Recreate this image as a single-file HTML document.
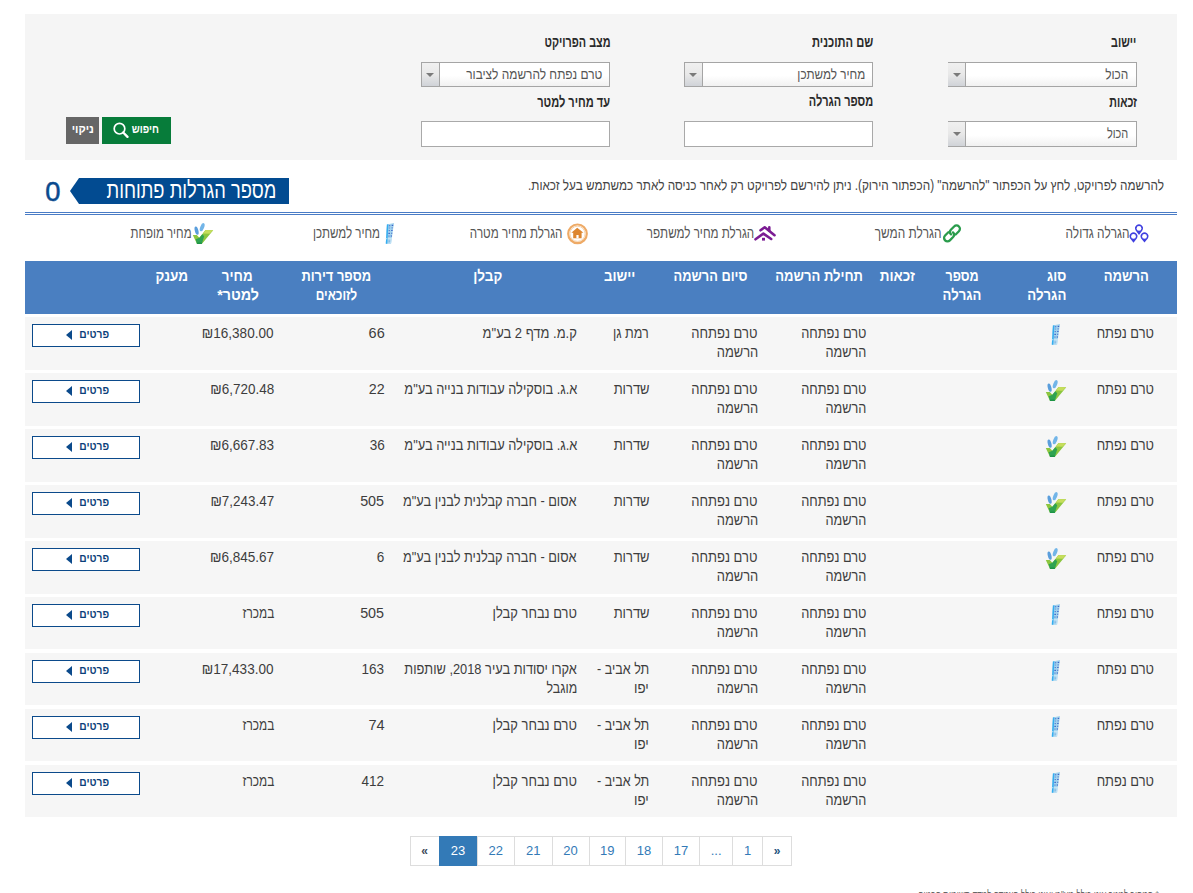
<!DOCTYPE html>
<html lang="he" dir="rtl">
<head>
<meta charset="utf-8">
<title>הגרלות</title>
<style>
html,body{margin:0;padding:0;background:#fff;}
body{width:1193px;height:893px;overflow:hidden;position:relative;font-family:"Liberation Sans",sans-serif;color:#333;}
.t{position:absolute;white-space:nowrap;direction:rtl;unicode-bidi:plaintext;transform-origin:100% 0;}
.panel{position:absolute;left:25px;top:14px;width:1152px;height:146px;background:#f5f5f5;}
.sel{position:absolute;height:23px;width:187px;border:1px solid #a5a5a5;background:linear-gradient(#fff 0,#fff 55%,#f1f1f1 100%);}
.sel .arr{position:absolute;left:0;top:0;width:17px;height:23px;border-right:1px solid #a5a5a5;background:linear-gradient(#f0f0f0 0,#e8e8e8 50%,#d0d3d8 100%);}
.sel .arr:after{content:"";position:absolute;left:4px;top:10px;border-left:4px solid transparent;border-right:4px solid transparent;border-top:4px solid #7a7a7a;}
.sel.nl{border-left:none;width:188px;}
.sel.nl .arr{width:17px;}
.sel.nl .arr:after{left:5px;}
.inp{position:absolute;height:24px;width:187px;border:1px solid #a9a9a9;background:#fff;}
.btn-g{position:absolute;left:102px;top:117px;width:69px;height:27px;background:#077c3a;}
.btn-k{position:absolute;left:66px;top:117px;width:33px;height:27px;background:#666;}
.banner{position:absolute;left:79px;top:178px;width:210px;height:26px;background:#024b91;}
.banner:before{content:"";position:absolute;left:-9px;top:0;border-right:9px solid #024b91;border-top:13px solid transparent;border-bottom:13px solid transparent;}
.dbl{position:absolute;left:25px;width:1152px;height:1px;background:#4a7cc6;}
.hdr{position:absolute;left:25px;top:261px;width:1152px;height:53px;background:#4a7fc1;}
.row{position:absolute;left:25px;width:1152px;height:53px;background:#f6f6f6;}
.det{position:absolute;left:32px;width:106px;height:21px;border:1px solid #0b4a8b;background:#fff;}
.tri{position:absolute;left:66px;width:0;height:0;border-right:6px solid #0b4a8b;border-top:5px solid transparent;border-bottom:5px solid transparent;}
.ico{position:absolute;overflow:visible;}
.pgbox{position:absolute;left:410px;top:836px;width:380px;height:28px;border:1px solid #ddd;}
.pgsep{position:absolute;top:836px;width:1px;height:30px;background:#ddd;}
.pgact{position:absolute;top:836px;height:30px;background:#337ab7;}
.pg{position:absolute;top:837px;height:28px;direction:ltr;font-size:13px;line-height:28px;text-align:center;color:#337ab7;}
</style>
</head>
<body>
<svg width="0" height="0" style="position:absolute">
<defs>
<symbol id="bld" viewBox="0 0 10 22">
  <polygon points="1.9,1.6 9,0.1 6,20.8 0.8,20.8" fill="#a3d3ee"/>
  <polygon points="5.5,15.2 7,15.2 6,20.8 5,20.8" fill="#c4e3f5"/>
  <polygon points="0.8,15.3 6.8,15.3 6.6,16.2 0.8,16.2" fill="#cfe8f6"/>
  <polygon points="1.9,1.6 3.4,1.3 2.3,20.8 0.8,20.8" fill="#33adf0"/>
  <polygon points="0.8,15.3 2.3,15.3 2.25,16.2 0.8,16.2" fill="#bfe2f6"/>
  <g fill="#3a62c8">
    <rect x="3.9" y="2.2" width="1.4" height="1.1" opacity=".8"/><rect x="6.7" y="1.8" width="1.5" height="1.2"/>
    <rect x="3.8" y="4.4" width="1.3" height="1.3" opacity=".45"/><rect x="6.5" y="4.2" width="1.3" height="1.3" opacity=".6"/>
    <rect x="3.6" y="7" width="1.4" height="1.1" opacity=".7"/><rect x="6.2" y="6.9" width="1.4" height="1.1"/>
    <rect x="3.4" y="9.8" width="1.5" height="1.2"/><rect x="6" y="9.7" width="1.3" height="1.2" opacity=".7"/>
    <rect x="3.3" y="12.4" width="1.3" height="1.4" opacity=".6"/><rect x="5.7" y="12.3" width="1.3" height="1.4" opacity=".8"/>
    <rect x="3.6" y="17.6" width="1.6" height="1" opacity=".35"/>
  </g>
</symbol>
<symbol id="spr" viewBox="0 0 22 22">
  <polygon points="0.8,13 4.8,13 7.4,15.8 13.5,8 21.2,8.3 9.8,22 5,22" fill="#8cc63f"/>
  <polygon points="13.5,8 21.2,8.3 17.6,11.8 10.9,11.6" fill="#c6dd5c"/>
  <polygon points="3.6,17.2 7.4,15.8 10.3,12.3 12.2,14.2 9.8,22 5,22" fill="#2fa352"/>
  <polygon points="5,22 9.8,22 9.3,20.5 5.4,20.5" fill="#1e9346"/>
  <ellipse cx="4.6" cy="8.6" rx="1.8" ry="4.3" transform="rotate(-14 4.6 8.6)" fill="#5a9edc"/>
  <ellipse cx="10.2" cy="5.2" rx="1.9" ry="4.3" transform="rotate(22 10.2 5.2)" fill="#72b5e8"/>
</symbol>
</defs>
</svg>

<div class="panel"></div>
<div class="sel nl" style="left:948px;top:62px"><div class="arr"></div></div>
<div class="sel" style="left:684px;top:62px"><div class="arr"></div></div>
<div class="sel" style="left:421px;top:62px"><div class="arr"></div></div>
<div class="sel nl" style="left:948px;top:121px;height:24px"><div class="arr" style="height:24px"></div></div>
<div class="inp" style="left:684px;top:121px"></div>
<div class="inp" style="left:421px;top:121px"></div>
<div class="btn-g"></div>
<div class="btn-k"></div>
<svg class="ico" style="left:112px;top:122px" width="18" height="17" viewBox="0 0 18 17">
  <circle cx="7.5" cy="6.7" r="5.3" fill="none" stroke="#fff" stroke-width="1.7"/>
  <line x1="11.2" y1="10.5" x2="15.5" y2="14.8" stroke="#fff" stroke-width="2.4" stroke-linecap="round"/>
</svg>

<div class="banner"></div>
<div class="dbl" style="top:212px"></div>
<div class="dbl" style="top:214px"></div>

<!-- legend icons -->
<svg class="ico" style="left:1126px;top:222px" width="26" height="24" viewBox="0 0 26 24" fill="none" stroke="#4040e0">
  <path d="M13,12.9 L9.7,8.4 A3.9,3.9 0 1 1 16.3,8.4 Z" fill="#4040e0" stroke="none"/>
  <circle cx="13" cy="6.4" r="2.4" fill="#fff" stroke="none"/>
  <path d="M7.5,20.8 L4.2,16.4 A3.9,3.9 0 1 1 10.8,16.4 Z" fill="#4040e0" stroke="none"/>
  <circle cx="7.5" cy="14.4" r="2.4" fill="#fff" stroke="none"/>
  <path d="M18.5,20.4 L15.2,16.4 A3.9,3.9 0 1 1 21.8,16.4 Z" fill="#4040e0" stroke="none"/>
  <circle cx="18.5" cy="14.4" r="2.4" fill="#fff" stroke="none"/>
</svg>
<svg class="ico" style="left:939px;top:222px" width="26" height="24" viewBox="0 0 26 24">
  <g fill="none" stroke="#2a9c4c" stroke-width="2.3" stroke-linecap="round" transform="rotate(-45 13 11.4)">
    <path d="M11.2,8 H6.6 A3.4,3.4 0 0 0 6.6,14.8 H11.2 A3.4,3.4 0 0 0 14.4,11.4"/>
    <path d="M14.8,14.8 H19.4 A3.4,3.4 0 0 0 19.4,8 H14.8 A3.4,3.4 0 0 0 11.6,11.4"/>
  </g>
</svg>
<svg class="ico" style="left:751px;top:222px" width="28" height="24" viewBox="0 0 28 24">
  <g fill="none" stroke="#7b1c93" stroke-width="2.6" stroke-linecap="round" stroke-linejoin="round">
    <polyline points="9.5,8.3 13.7,5.3 23.5,13.2"/>
    <polyline points="4.5,17.3 12.4,11.6 20.2,17"/>
    <line x1="18.3" y1="5.4" x2="18.3" y2="8.5"/>
  </g>
  <rect x="11" y="15.8" width="3" height="2.8" fill="#7b1c93"/>
</svg>
<svg class="ico" style="left:563px;top:221px" width="28" height="26" viewBox="0 0 28 26">
  <circle cx="14.5" cy="12.8" r="9.3" fill="#fff" stroke="#eeaa66" stroke-width="2.2"/>
  <circle cx="14.5" cy="12.8" r="7.6" fill="none" stroke="#f6d2aa" stroke-width="1"/>
  <polygon points="14.2,6.8 20.5,11.8 18.6,11.8 18.6,17.2 10.2,17.2 10.2,11.8 8.3,11.8" fill="#dd8630"/>
  <rect x="13.4" y="14" width="2.2" height="3.2" fill="#fff"/>
</svg>
<svg class="ico" style="left:385px;top:223px" width="10" height="22" viewBox="0 0 10 22"><use href="#bld"/></svg>
<svg class="ico" style="left:191.5px;top:222px" width="22" height="22" viewBox="0 0 22 22"><use href="#spr"/></svg>

<div class="hdr"></div>
<div class="row" style="top:317px"></div>
<div class="det" style="top:324px"></div><div class="tri" style="top:330px"></div>
<svg class="ico" style="left:1051px;top:324px" width="10" height="22" viewBox="0 0 10 22"><use href="#bld"/></svg>
<div class="row" style="top:373px"></div>
<div class="det" style="top:380px"></div><div class="tri" style="top:386px"></div>
<svg class="ico" style="left:1045px;top:379px" width="22" height="22" viewBox="0 0 22 22"><use href="#spr"/></svg>
<div class="row" style="top:429px"></div>
<div class="det" style="top:436px"></div><div class="tri" style="top:442px"></div>
<svg class="ico" style="left:1045px;top:435px" width="22" height="22" viewBox="0 0 22 22"><use href="#spr"/></svg>
<div class="row" style="top:485px"></div>
<div class="det" style="top:492px"></div><div class="tri" style="top:498px"></div>
<svg class="ico" style="left:1045px;top:491px" width="22" height="22" viewBox="0 0 22 22"><use href="#spr"/></svg>
<div class="row" style="top:541px"></div>
<div class="det" style="top:548px"></div><div class="tri" style="top:554px"></div>
<svg class="ico" style="left:1045px;top:547px" width="22" height="22" viewBox="0 0 22 22"><use href="#spr"/></svg>
<div class="row" style="top:597px;height:52px"></div>
<div class="det" style="top:604px"></div><div class="tri" style="top:610px"></div>
<svg class="ico" style="left:1051px;top:604px" width="10" height="22" viewBox="0 0 10 22"><use href="#bld"/></svg>
<div class="row" style="top:653px;height:52px"></div>
<div class="det" style="top:660px"></div><div class="tri" style="top:666px"></div>
<svg class="ico" style="left:1051px;top:660px" width="10" height="22" viewBox="0 0 10 22"><use href="#bld"/></svg>
<div class="row" style="top:709px;height:52px"></div>
<div class="det" style="top:716px"></div><div class="tri" style="top:722px"></div>
<svg class="ico" style="left:1051px;top:716px" width="10" height="22" viewBox="0 0 10 22"><use href="#bld"/></svg>
<div class="row" style="top:765px;height:52px"></div>
<div class="det" style="top:772px"></div><div class="tri" style="top:778px"></div>
<svg class="ico" style="left:1051px;top:772px" width="10" height="22" viewBox="0 0 10 22"><use href="#bld"/></svg>
<div class="pgbox"></div>
<div class="pgsep" style="left:438.5px"></div>
<div class="pgsep" style="left:476.5px"></div>
<div class="pgsep" style="left:514.0px"></div>
<div class="pgsep" style="left:551.5px"></div>
<div class="pgsep" style="left:588.5px"></div>
<div class="pgsep" style="left:625.0px"></div>
<div class="pgsep" style="left:662.0px"></div>
<div class="pgsep" style="left:699.2px"></div>
<div class="pgsep" style="left:732.1px"></div>
<div class="pgsep" style="left:761.9px"></div>
<div class="pg" style="left:410px;width:29px;color:#3d4a5a;font-weight:bold;font-size:12px;">«</div>
<div class="pgact" style="left:439px;width:38px"></div>
<div class="pg" style="left:439px;width:38px;color:#fff;">23</div>
<div class="pg" style="left:477px;width:37.5px;">22</div>
<div class="pg" style="left:514.5px;width:37.5px;">21</div>
<div class="pg" style="left:552px;width:37px;">20</div>
<div class="pg" style="left:589px;width:36.5px;">19</div>
<div class="pg" style="left:625.5px;width:37.0px;">18</div>
<div class="pg" style="left:662.5px;width:37.200000000000045px;">17</div>
<div class="pg" style="left:699.7px;width:32.89999999999998px;">...</div>
<div class="pg" style="left:732.6px;width:29.799999999999955px;">1</div>
<div class="pg" style="left:762.4px;width:29.300000000000068px;color:#23527c;font-weight:bold;font-size:12px;">»</div>
<div class="t" style="left:1101.33px;top:34.3px;font-size:15px;line-height:15px;font-weight:700;color:#2a2a2a;transform:scaleX(0.715);">יישוב</div>
<div class="t" style="left:791.35px;top:34.3px;font-size:15px;line-height:15px;font-weight:700;color:#2a2a2a;transform:scaleX(0.744);">שם התוכנית</div>
<div class="t" style="left:518.67px;top:34.3px;font-size:15px;line-height:15px;font-weight:700;color:#2a2a2a;transform:scaleX(0.721);">מצב הפרויקט</div>
<div class="t" style="left:1097.78px;top:93.8px;font-size:15px;line-height:15px;font-weight:700;color:#2a2a2a;transform:scaleX(0.710);">זכאות</div>
<div class="t" style="left:785.41px;top:93.3px;font-size:15px;line-height:15px;font-weight:700;color:#2a2a2a;transform:scaleX(0.731);">מספר הגרלה</div>
<div class="t" style="left:511.17px;top:93.8px;font-size:15px;line-height:15px;font-weight:700;color:#2a2a2a;transform:scaleX(0.735);">עד מחיר למטר</div>
<div class="t" style="left:1101.12px;top:67.15px;font-size:14px;line-height:14px;color:#555;transform:scaleX(0.847);">הכול</div>
<div class="t" style="left:784.26px;top:67.15px;font-size:14px;line-height:14px;color:#555;transform:scaleX(0.836);">מחיר למשתכן</div>
<div class="t" style="left:442.26px;top:66.55px;font-size:14px;line-height:14px;color:#555;transform:scaleX(0.849);">טרם נפתח להרשמה לציבור</div>
<div class="t" style="left:1101.02px;top:126.15px;font-size:14px;line-height:14px;color:#555;transform:scaleX(0.781);">הכול</div>
<div class="t" style="left:125.51px;top:123.14px;font-size:12px;line-height:12px;font-weight:700;color:#fff;transform:scaleX(0.824);">חיפוש</div>
<div class="t" style="left:69.71px;top:123.14px;font-size:12px;line-height:12px;font-weight:700;color:#fff;transform:scaleX(0.929);">ניקוי</div>
<div class="t" style="left:405.74px;top:178.15px;font-size:14px;line-height:14px;color:#444;transform:scaleX(0.839);">להרשמה לפרויקט, לחץ על הכפתור "להרשמה" (הכפתור הירוק). ניתן להירשם לפרויקט רק לאחר כניסה לאתר כמשתמש בעל זכאות.</div>
<div class="t" style="left:62.8px;top:178.83px;font-size:23px;line-height:23px;color:#fff;transform:scaleX(0.796);">מספר הגרלות פתוחות</div>
<div class="t" style="left:45.02px;top:177.8px;font-size:28px;line-height:28px;color:#0a4a8e;transform:scaleX(0.976);-webkit-text-stroke:0.5px #0a4a8e;">0</div>
<div class="t" style="left:1045.71px;top:224.88px;font-size:15.5px;line-height:15.5px;color:#555;transform:scaleX(0.766);">הגרלה גדולה</div>
<div class="t" style="left:854.1px;top:224.88px;font-size:15.5px;line-height:15.5px;color:#555;transform:scaleX(0.763);">הגרלת המשך</div>
<div class="t" style="left:611.2px;top:224.88px;font-size:15.5px;line-height:15.5px;color:#555;transform:scaleX(0.750);">הגרלת מחיר למשתפר</div>
<div class="t" style="left:439.15px;top:224.88px;font-size:15.5px;line-height:15.5px;color:#555;transform:scaleX(0.750);">הגרלת מחיר מטרה</div>
<div class="t" style="left:289.54px;top:224.88px;font-size:15.5px;line-height:15.5px;color:#555;transform:scaleX(0.746);">מחיר למשתכן</div>
<div class="t" style="left:109.28px;top:224.88px;font-size:15.5px;line-height:15.5px;color:#555;transform:scaleX(0.740);">מחיר מופחת</div>
<div class="t" style="left:1096.51px;top:268.3px;font-size:15px;line-height:15px;font-weight:700;color:#fff;transform:scaleX(0.871);">הרשמה</div>
<div class="t" style="left:1044.41px;top:268.3px;font-size:15px;line-height:15px;font-weight:700;color:#fff;transform:scaleX(0.865);">סוג</div>
<div class="t" style="left:1022.21px;top:287px;font-size:15px;line-height:15px;font-weight:700;color:#fff;transform:scaleX(0.883);">הגרלה</div>
<div class="t" style="left:938.96px;top:268.3px;font-size:15px;line-height:15px;font-weight:700;color:#fff;transform:scaleX(0.838);">מספר</div>
<div class="t" style="left:936.81px;top:287px;font-size:15px;line-height:15px;font-weight:700;color:#fff;transform:scaleX(0.874);">הגרלה</div>
<div class="t" style="left:875.58px;top:268.3px;font-size:15px;line-height:15px;font-weight:700;color:#fff;transform:scaleX(0.902);">זכאות</div>
<div class="t" style="left:761.69px;top:268.3px;font-size:15px;line-height:15px;font-weight:700;color:#fff;transform:scaleX(0.868);">תחילת הרשמה</div>
<div class="t" style="left:660.91px;top:268.3px;font-size:15px;line-height:15px;font-weight:700;color:#fff;transform:scaleX(0.855);">סיום הרשמה</div>
<div class="t" style="left:600.13px;top:268.3px;font-size:15px;line-height:15px;font-weight:700;color:#fff;transform:scaleX(0.890);">יישוב</div>
<div class="t" style="left:469.88px;top:268.3px;font-size:15px;line-height:15px;font-weight:700;color:#fff;transform:scaleX(0.900);">קבלן</div>
<div class="t" style="left:290px;top:268.3px;font-size:15px;line-height:15px;font-weight:700;color:#fff;transform:scaleX(0.859);">מספר דירות</div>
<div class="t" style="left:305.44px;top:287px;font-size:15px;line-height:15px;font-weight:700;color:#fff;transform:scaleX(0.794);">לזוכאים</div>
<div class="t" style="left:218.42px;top:268.3px;font-size:15px;line-height:15px;font-weight:700;color:#fff;transform:scaleX(0.888);">מחיר</div>
<div class="t" style="left:215.03px;top:287px;font-size:15px;line-height:15px;font-weight:700;color:#fff;transform:scaleX(0.951);">למטר*</div>
<div class="t" style="left:151.6px;top:268.3px;font-size:15px;line-height:15px;font-weight:700;color:#fff;transform:scaleX(0.900);">מענק</div>
<div class="t" style="left:1087.28px;top:325.3px;font-size:15px;line-height:15px;color:#3d3d3d;transform:scaleX(0.856);">טרם נפתח</div>
<div class="t" style="left:789.66px;top:325.3px;font-size:15px;line-height:15px;color:#3d3d3d;transform:scaleX(0.853);">טרם נפתחה</div>
<div class="t" style="left:817.82px;top:344.3px;font-size:15px;line-height:15px;color:#3d3d3d;transform:scaleX(0.847);">הרשמה</div>
<div class="t" style="left:681.46px;top:325.3px;font-size:15px;line-height:15px;color:#3d3d3d;transform:scaleX(0.865);">טרם נפתחה</div>
<div class="t" style="left:709.62px;top:344.3px;font-size:15px;line-height:15px;color:#3d3d3d;transform:scaleX(0.860);">הרשמה</div>
<div class="t" style="left:606.44px;top:325.3px;font-size:15px;line-height:15px;color:#3d3d3d;transform:scaleX(0.837);">רמת גן</div>
<div class="t" style="left:468.21px;top:325.3px;font-size:15px;line-height:15px;color:#3d3d3d;transform:scaleX(0.866);">ק.מ. מדף 2 בע"מ</div>
<div class="t" style="left:367.61px;top:325.3px;font-size:15px;line-height:15px;color:#3d3d3d;transform:scaleX(0.965);">66</div>
<div class="t" style="left:194.43px;top:325.3px;font-size:15px;line-height:15px;color:#3d3d3d;transform:scaleX(0.902);">₪16,380.00</div>
<div class="t" style="left:77.49px;top:329.09px;font-size:11px;line-height:11px;font-weight:700;color:#0b3f7a;transform:scaleX(0.928);">פרטים</div>
<div class="t" style="left:1087.28px;top:381.3px;font-size:15px;line-height:15px;color:#3d3d3d;transform:scaleX(0.856);">טרם נפתח</div>
<div class="t" style="left:789.66px;top:381.3px;font-size:15px;line-height:15px;color:#3d3d3d;transform:scaleX(0.853);">טרם נפתחה</div>
<div class="t" style="left:817.82px;top:400.3px;font-size:15px;line-height:15px;color:#3d3d3d;transform:scaleX(0.847);">הרשמה</div>
<div class="t" style="left:681.46px;top:381.3px;font-size:15px;line-height:15px;color:#3d3d3d;transform:scaleX(0.865);">טרם נפתחה</div>
<div class="t" style="left:709.62px;top:400.3px;font-size:15px;line-height:15px;color:#3d3d3d;transform:scaleX(0.860);">הרשמה</div>
<div class="t" style="left:607.55px;top:381.3px;font-size:15px;line-height:15px;color:#3d3d3d;transform:scaleX(0.864);">שדרות</div>
<div class="t" style="left:374.71px;top:381.3px;font-size:15px;line-height:15px;color:#3d3d3d;transform:scaleX(0.855);">א.ג. בוסקילה עבודות בנייה בע"מ</div>
<div class="t" style="left:367.61px;top:381.3px;font-size:15px;line-height:15px;color:#3d3d3d;transform:scaleX(0.953);">22</div>
<div class="t" style="left:202.76px;top:381.3px;font-size:15px;line-height:15px;color:#3d3d3d;transform:scaleX(0.898);">₪6,720.48</div>
<div class="t" style="left:77.49px;top:385.09px;font-size:11px;line-height:11px;font-weight:700;color:#0b3f7a;transform:scaleX(0.928);">פרטים</div>
<div class="t" style="left:1087.28px;top:437.3px;font-size:15px;line-height:15px;color:#3d3d3d;transform:scaleX(0.856);">טרם נפתח</div>
<div class="t" style="left:789.66px;top:437.3px;font-size:15px;line-height:15px;color:#3d3d3d;transform:scaleX(0.853);">טרם נפתחה</div>
<div class="t" style="left:817.82px;top:456.3px;font-size:15px;line-height:15px;color:#3d3d3d;transform:scaleX(0.847);">הרשמה</div>
<div class="t" style="left:681.46px;top:437.3px;font-size:15px;line-height:15px;color:#3d3d3d;transform:scaleX(0.865);">טרם נפתחה</div>
<div class="t" style="left:709.62px;top:456.3px;font-size:15px;line-height:15px;color:#3d3d3d;transform:scaleX(0.860);">הרשמה</div>
<div class="t" style="left:607.55px;top:437.3px;font-size:15px;line-height:15px;color:#3d3d3d;transform:scaleX(0.864);">שדרות</div>
<div class="t" style="left:374.71px;top:437.3px;font-size:15px;line-height:15px;color:#3d3d3d;transform:scaleX(0.855);">א.ג. בוסקילה עבודות בנייה בע"מ</div>
<div class="t" style="left:367.61px;top:437.3px;font-size:15px;line-height:15px;color:#3d3d3d;transform:scaleX(0.902);">36</div>
<div class="t" style="left:202.76px;top:437.3px;font-size:15px;line-height:15px;color:#3d3d3d;transform:scaleX(0.902);">₪6,667.83</div>
<div class="t" style="left:77.49px;top:441.09px;font-size:11px;line-height:11px;font-weight:700;color:#0b3f7a;transform:scaleX(0.928);">פרטים</div>
<div class="t" style="left:1087.28px;top:493.3px;font-size:15px;line-height:15px;color:#3d3d3d;transform:scaleX(0.856);">טרם נפתח</div>
<div class="t" style="left:789.66px;top:493.3px;font-size:15px;line-height:15px;color:#3d3d3d;transform:scaleX(0.853);">טרם נפתחה</div>
<div class="t" style="left:817.82px;top:512.3px;font-size:15px;line-height:15px;color:#3d3d3d;transform:scaleX(0.847);">הרשמה</div>
<div class="t" style="left:681.46px;top:493.3px;font-size:15px;line-height:15px;color:#3d3d3d;transform:scaleX(0.865);">טרם נפתחה</div>
<div class="t" style="left:709.62px;top:512.3px;font-size:15px;line-height:15px;color:#3d3d3d;transform:scaleX(0.860);">הרשמה</div>
<div class="t" style="left:607.55px;top:493.3px;font-size:15px;line-height:15px;color:#3d3d3d;transform:scaleX(0.864);">שדרות</div>
<div class="t" style="left:373.48px;top:493.3px;font-size:15px;line-height:15px;color:#3d3d3d;transform:scaleX(0.853);">אסום - חברה קבלנית לבנין בע"מ</div>
<div class="t" style="left:359.27px;top:493.3px;font-size:15px;line-height:15px;color:#3d3d3d;transform:scaleX(0.955);">505</div>
<div class="t" style="left:202.76px;top:493.3px;font-size:15px;line-height:15px;color:#3d3d3d;transform:scaleX(0.895);">₪7,243.47</div>
<div class="t" style="left:77.49px;top:497.09px;font-size:11px;line-height:11px;font-weight:700;color:#0b3f7a;transform:scaleX(0.928);">פרטים</div>
<div class="t" style="left:1087.28px;top:549.3px;font-size:15px;line-height:15px;color:#3d3d3d;transform:scaleX(0.856);">טרם נפתח</div>
<div class="t" style="left:789.66px;top:549.3px;font-size:15px;line-height:15px;color:#3d3d3d;transform:scaleX(0.853);">טרם נפתחה</div>
<div class="t" style="left:817.82px;top:568.3px;font-size:15px;line-height:15px;color:#3d3d3d;transform:scaleX(0.847);">הרשמה</div>
<div class="t" style="left:681.46px;top:549.3px;font-size:15px;line-height:15px;color:#3d3d3d;transform:scaleX(0.865);">טרם נפתחה</div>
<div class="t" style="left:709.62px;top:568.3px;font-size:15px;line-height:15px;color:#3d3d3d;transform:scaleX(0.860);">הרשמה</div>
<div class="t" style="left:607.55px;top:549.3px;font-size:15px;line-height:15px;color:#3d3d3d;transform:scaleX(0.864);">שדרות</div>
<div class="t" style="left:373.48px;top:549.3px;font-size:15px;line-height:15px;color:#3d3d3d;transform:scaleX(0.853);">אסום - חברה קבלנית לבנין בע"מ</div>
<div class="t" style="left:375.96px;top:549.3px;font-size:15px;line-height:15px;color:#3d3d3d;transform:scaleX(0.902);">6</div>
<div class="t" style="left:202.76px;top:549.3px;font-size:15px;line-height:15px;color:#3d3d3d;transform:scaleX(0.902);">₪6,845.67</div>
<div class="t" style="left:77.49px;top:553.09px;font-size:11px;line-height:11px;font-weight:700;color:#0b3f7a;transform:scaleX(0.928);">פרטים</div>
<div class="t" style="left:1087.28px;top:605.3px;font-size:15px;line-height:15px;color:#3d3d3d;transform:scaleX(0.856);">טרם נפתח</div>
<div class="t" style="left:789.66px;top:605.3px;font-size:15px;line-height:15px;color:#3d3d3d;transform:scaleX(0.853);">טרם נפתחה</div>
<div class="t" style="left:817.82px;top:624.3px;font-size:15px;line-height:15px;color:#3d3d3d;transform:scaleX(0.847);">הרשמה</div>
<div class="t" style="left:681.46px;top:605.3px;font-size:15px;line-height:15px;color:#3d3d3d;transform:scaleX(0.865);">טרם נפתחה</div>
<div class="t" style="left:709.62px;top:624.3px;font-size:15px;line-height:15px;color:#3d3d3d;transform:scaleX(0.860);">הרשמה</div>
<div class="t" style="left:607.55px;top:605.3px;font-size:15px;line-height:15px;color:#3d3d3d;transform:scaleX(0.864);">שדרות</div>
<div class="t" style="left:479.16px;top:605.3px;font-size:15px;line-height:15px;color:#3d3d3d;transform:scaleX(0.861);">טרם נבחר קבלן</div>
<div class="t" style="left:359.27px;top:605.3px;font-size:15px;line-height:15px;color:#3d3d3d;transform:scaleX(0.955);">505</div>
<div class="t" style="left:233.59px;top:605.3px;font-size:15px;line-height:15px;color:#3d3d3d;transform:scaleX(0.791);">במכרז</div>
<div class="t" style="left:77.49px;top:609.09px;font-size:11px;line-height:11px;font-weight:700;color:#0b3f7a;transform:scaleX(0.928);">פרטים</div>
<div class="t" style="left:1087.28px;top:661.3px;font-size:15px;line-height:15px;color:#3d3d3d;transform:scaleX(0.856);">טרם נפתח</div>
<div class="t" style="left:789.66px;top:661.3px;font-size:15px;line-height:15px;color:#3d3d3d;transform:scaleX(0.853);">טרם נפתחה</div>
<div class="t" style="left:817.82px;top:680.3px;font-size:15px;line-height:15px;color:#3d3d3d;transform:scaleX(0.847);">הרשמה</div>
<div class="t" style="left:681.46px;top:661.3px;font-size:15px;line-height:15px;color:#3d3d3d;transform:scaleX(0.865);">טרם נפתחה</div>
<div class="t" style="left:709.62px;top:680.3px;font-size:15px;line-height:15px;color:#3d3d3d;transform:scaleX(0.860);">הרשמה</div>
<div class="t" style="left:586.79px;top:661.3px;font-size:15px;line-height:15px;color:#3d3d3d;transform:scaleX(0.838);">תל אביב -</div>
<div class="t" style="left:632.46px;top:680.3px;font-size:15px;line-height:15px;color:#3d3d3d;transform:scaleX(0.883);">יפו</div>
<div class="t" style="left:375.18px;top:661.3px;font-size:15px;line-height:15px;color:#3d3d3d;transform:scaleX(0.855);">אקרו יסודות בעיר 2018, שותפות</div>
<div class="t" style="left:539.93px;top:680.3px;font-size:15px;line-height:15px;color:#3d3d3d;transform:scaleX(0.826);">מוגבל</div>
<div class="t" style="left:359.27px;top:661.3px;font-size:15px;line-height:15px;color:#3d3d3d;transform:scaleX(0.902);">163</div>
<div class="t" style="left:194.43px;top:661.3px;font-size:15px;line-height:15px;color:#3d3d3d;transform:scaleX(0.902);">₪17,433.00</div>
<div class="t" style="left:77.49px;top:665.09px;font-size:11px;line-height:11px;font-weight:700;color:#0b3f7a;transform:scaleX(0.928);">פרטים</div>
<div class="t" style="left:1087.28px;top:717.3px;font-size:15px;line-height:15px;color:#3d3d3d;transform:scaleX(0.856);">טרם נפתח</div>
<div class="t" style="left:789.66px;top:717.3px;font-size:15px;line-height:15px;color:#3d3d3d;transform:scaleX(0.853);">טרם נפתחה</div>
<div class="t" style="left:817.82px;top:736.3px;font-size:15px;line-height:15px;color:#3d3d3d;transform:scaleX(0.847);">הרשמה</div>
<div class="t" style="left:681.46px;top:717.3px;font-size:15px;line-height:15px;color:#3d3d3d;transform:scaleX(0.865);">טרם נפתחה</div>
<div class="t" style="left:709.62px;top:736.3px;font-size:15px;line-height:15px;color:#3d3d3d;transform:scaleX(0.860);">הרשמה</div>
<div class="t" style="left:586.79px;top:717.3px;font-size:15px;line-height:15px;color:#3d3d3d;transform:scaleX(0.838);">תל אביב -</div>
<div class="t" style="left:632.46px;top:736.3px;font-size:15px;line-height:15px;color:#3d3d3d;transform:scaleX(0.883);">יפו</div>
<div class="t" style="left:479.16px;top:717.3px;font-size:15px;line-height:15px;color:#3d3d3d;transform:scaleX(0.861);">טרם נבחר קבלן</div>
<div class="t" style="left:367.61px;top:717.3px;font-size:15px;line-height:15px;color:#3d3d3d;transform:scaleX(0.971);">74</div>
<div class="t" style="left:233.59px;top:717.3px;font-size:15px;line-height:15px;color:#3d3d3d;transform:scaleX(0.791);">במכרז</div>
<div class="t" style="left:77.49px;top:721.09px;font-size:11px;line-height:11px;font-weight:700;color:#0b3f7a;transform:scaleX(0.928);">פרטים</div>
<div class="t" style="left:1087.28px;top:773.3px;font-size:15px;line-height:15px;color:#3d3d3d;transform:scaleX(0.856);">טרם נפתח</div>
<div class="t" style="left:789.66px;top:773.3px;font-size:15px;line-height:15px;color:#3d3d3d;transform:scaleX(0.853);">טרם נפתחה</div>
<div class="t" style="left:817.82px;top:792.3px;font-size:15px;line-height:15px;color:#3d3d3d;transform:scaleX(0.847);">הרשמה</div>
<div class="t" style="left:681.46px;top:773.3px;font-size:15px;line-height:15px;color:#3d3d3d;transform:scaleX(0.865);">טרם נפתחה</div>
<div class="t" style="left:709.62px;top:792.3px;font-size:15px;line-height:15px;color:#3d3d3d;transform:scaleX(0.860);">הרשמה</div>
<div class="t" style="left:586.79px;top:773.3px;font-size:15px;line-height:15px;color:#3d3d3d;transform:scaleX(0.838);">תל אביב -</div>
<div class="t" style="left:632.46px;top:792.3px;font-size:15px;line-height:15px;color:#3d3d3d;transform:scaleX(0.883);">יפו</div>
<div class="t" style="left:479.16px;top:773.3px;font-size:15px;line-height:15px;color:#3d3d3d;transform:scaleX(0.861);">טרם נבחר קבלן</div>
<div class="t" style="left:359.27px;top:773.3px;font-size:15px;line-height:15px;color:#3d3d3d;transform:scaleX(0.902);">412</div>
<div class="t" style="left:233.59px;top:773.3px;font-size:15px;line-height:15px;color:#3d3d3d;transform:scaleX(0.791);">במכרז</div>
<div class="t" style="left:77.49px;top:777.09px;font-size:11px;line-height:11px;font-weight:700;color:#0b3f7a;transform:scaleX(0.928);">פרטים</div>
<div class="t" style="left:777.87px;top:888.5px;font-size:13px;line-height:13px;color:#666;transform:scaleX(0.631);">* המחיר למטר אינו כולל מע"מ ואינו כולל הצמדה למדד תשומות הבנייה</div>
</body>
</html>
